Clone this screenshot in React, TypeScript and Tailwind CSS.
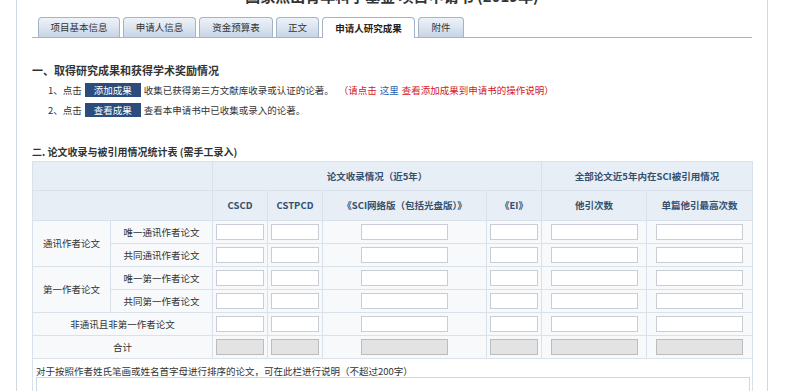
import React from "react";

const tabs = [
  { t: "项目基本信息", w: "w-[82px]", active: false },
  { t: "申请人信息", w: "w-[73px]", active: false },
  { t: "资金预算表", w: "w-[74px]", active: false },
  { t: "正文", w: "w-[43px]", active: false },
  { t: "申请人研究成果", w: "w-[93px]", active: true },
  { t: "附件", w: "w-[46px]", active: false },
];

function Inp({ wide, gray }: { wide?: boolean; gray?: boolean }) {
  return (
    <input
      type="text"
      readOnly
      className={
        "inline-block align-middle h-[16px] border outline-none " +
        (wide ? "w-[87px] " : "w-[48px] ") +
        (gray ? "bg-[#e3e3e3] border-[#bcbcbc]" : "bg-white border-[#c9ced6]")
      }
    />
  );
}

function InputCells({ gray }: { gray?: boolean }) {
  return (
    <>
      <td className="border border-[#d9e1ea] text-center p-0"><Inp gray={gray} /></td>
      <td className="border border-[#d9e1ea] text-center p-0"><Inp gray={gray} /></td>
      <td className="border border-[#d9e1ea] text-center p-0"><Inp wide gray={gray} /></td>
      <td className="border border-[#d9e1ea] text-center p-0"><Inp gray={gray} /></td>
      <td className="border border-[#d9e1ea] text-center p-0"><Inp wide gray={gray} /></td>
      <td className="border border-[#d9e1ea] text-center p-0"><Inp wide gray={gray} /></td>
    </>
  );
}

const cell = "border border-[#d9e1ea] text-center p-0 text-[#333]";
const head = "border border-[#d9e1ea] text-center p-0 font-bold text-[#34506f] bg-[#e8eef5]";

export default function App() {
  return (
    <div className="w-[800px] h-[391px] overflow-hidden bg-white font-[family-name:'Noto_Sans_CJK_SC','Noto_Sans',sans-serif] text-[9.5px] text-[#333]">
      <div className="ml-[16px] w-[752px] h-full border-x border-[#cfd8e0] px-[15px]">
        {/* title (cut off at top) */}
        <div className="h-[17px] overflow-hidden">
          <div className="mt-[-13px] text-center text-[15px] leading-[18px] font-bold text-[#333]">
            国家杰出青年科学基金 项目申请书 (2019年)
          </div>
        </div>

        {/* tabs */}
        <div className="flex items-end gap-[3px] pl-[6px] h-[21px] border-b border-[#a7b4c4]">
          {tabs.map((tab) => (
            <div
              key={tab.t}
              className={
                tab.w +
                " flex items-center justify-center rounded-t-[4px] border border-b-0 border-[#a3b3c8] " +
                (tab.active
                  ? "h-[21px] mb-[-1px] bg-white font-bold text-[#222] relative"
                  : "h-[20px] bg-gradient-to-b from-[#eef3f9] to-[#c8d5e6] text-[#333]")
              }
            >
              {tab.t}
            </div>
          ))}
        </div>

        {/* section 1 */}
        <div className="mt-[24px] text-[11px] leading-[16px] font-bold text-[#333]">
          一、取得研究成果和获得学术奖励情况
        </div>
        <div className="mt-[2px] h-[20px] flex items-center pl-[16px]">
          <span>1、点击</span>
          <span className="ml-[3px] w-[56px] h-[14px] bg-[#2c4d7c] text-white flex items-center justify-center">添加成果</span>
          <span className="ml-[3px]">收集已获得第三方文献库收录或认证的论著。</span>
          <span className="ml-[5px] text-[#d42020]">（请点击</span>
          <span className="mx-[3px] text-[#1f5fb0]">这里</span>
          <span className="text-[#d42020]">查看添加成果到申请书的操作说明）</span>
        </div>
        <div className="h-[20px] flex items-center pl-[16px]">
          <span>2、点击</span>
          <span className="ml-[3px] w-[56px] h-[14px] bg-[#2c4d7c] text-white flex items-center justify-center">查看成果</span>
          <span className="ml-[3px]">查看本申请书中已收集或录入的论著。</span>
        </div>

        {/* section 2 */}
        <div className="mt-[24px] text-[10px] leading-[16px] font-bold text-[#333]">
          二. 论文收录与被引用情况统计表 (需手工录入)
        </div>
        <table className="mt-[1px] w-[720px] table-fixed border-collapse">
          <colgroup>
            <col className="w-[78px]" />
            <col className="w-[102px]" />
            <col className="w-[55px]" />
            <col className="w-[55px]" />
            <col className="w-[164px]" />
            <col className="w-[55px]" />
            <col className="w-[105px]" />
            <col className="w-[106px]" />
          </colgroup>
          <tbody>
            <tr className="h-[29px]">
              <td colSpan={2} className={head}></td>
              <td colSpan={4} className={head}>论文收录情况（近5年）</td>
              <td colSpan={2} className={head}>全部论文近5年内在SCI被引用情况</td>
            </tr>
            <tr className="h-[30px]">
              <td colSpan={2} className={head}></td>
              <td className={head}>CSCD</td>
              <td className={head}>CSTPCD</td>
              <td className={head}>《SCI网络版（包括光盘版）》</td>
              <td className={head}>《EI》</td>
              <td className={head}>他引次数</td>
              <td className={head}>单篇他引最高次数</td>
            </tr>
            <tr className="h-[23px] bg-[#f7f9fb]">
              <td rowSpan={2} className={cell}>通讯作者论文</td>
              <td className={cell}>唯一通讯作者论文</td>
              <InputCells />
            </tr>
            <tr className="h-[23px] bg-[#f7f9fb]">
              <td className={cell}>共同通讯作者论文</td>
              <InputCells />
            </tr>
            <tr className="h-[23px] bg-[#f7f9fb]">
              <td rowSpan={2} className={cell}>第一作者论文</td>
              <td className={cell}>唯一第一作者论文</td>
              <InputCells />
            </tr>
            <tr className="h-[23px] bg-[#f7f9fb]">
              <td className={cell}>共同第一作者论文</td>
              <InputCells />
            </tr>
            <tr className="h-[23px] bg-[#f7f9fb]">
              <td colSpan={2} className={cell}>非通讯且非第一作者论文</td>
              <InputCells />
            </tr>
            <tr className="h-[23px] bg-[#f7f9fb]">
              <td colSpan={2} className={cell}>合计</td>
              <InputCells gray />
            </tr>
            <tr className="bg-white">
              <td colSpan={8} className="border border-[#d9e1ea] px-[3px] pt-[6px] pb-[4px] align-top">
                <div className="leading-[12px] text-[#333]">
                  对于按照作者姓氏笔画或姓名首字母进行排序的论文，可在此栏进行说明（不超过200字）
                </div>
                <textarea
                  readOnly
                  className="block w-[714px] h-[60px] border border-[#cfd8e0] bg-white resize-none outline-none"
                />
              </td>
            </tr>
          </tbody>
        </table>
      </div>
    </div>
  );
}
